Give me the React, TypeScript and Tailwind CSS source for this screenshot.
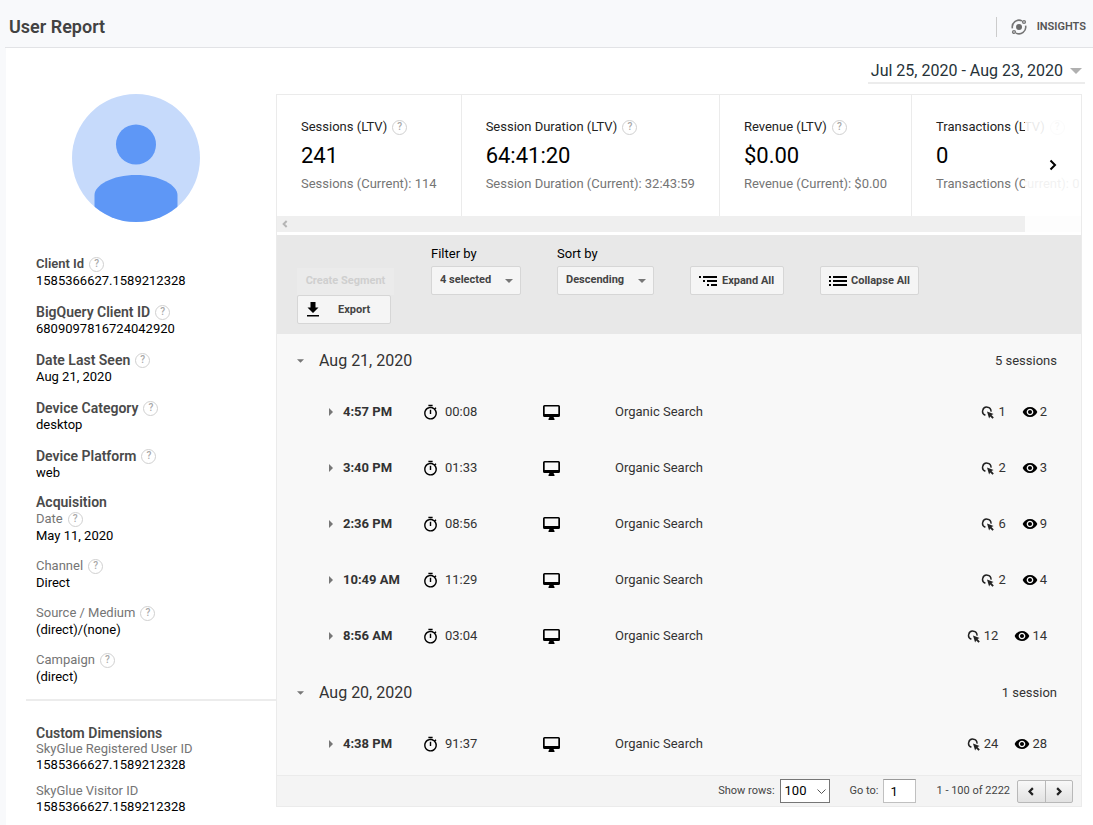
import { useState } from 'react'
import { MdOutlineTimer, MdVisibility } from 'react-icons/md'

type Session = { time: string; duration: string; source: string; events: number; views: number }
type Day = { date: string; total: string; sessions: Session[] }

const details = [
  { label: 'Client Id', value: '1585366627.1589212328', size: 'text-[13px]' },
  { label: 'BigQuery Client ID', value: '6809097816724042920', size: 'text-sm' },
  { label: 'Date Last Seen', value: 'Aug 21, 2020', size: 'text-sm' },
  { label: 'Device Category', value: 'desktop', size: 'text-sm' },
  { label: 'Device Platform', value: 'web', size: 'text-sm' },
]

const acquisition = [
  { label: 'Date', value: 'May 11, 2020' },
  { label: 'Channel', value: 'Direct' },
  { label: 'Source / Medium', value: '(direct)/(none)' },
  { label: 'Campaign', value: '(direct)' },
]

const dimensions = [
  { label: 'SkyGlue Registered User ID', value: '1585366627.1589212328' },
  { label: 'SkyGlue Visitor ID', value: '1585366627.1589212328' },
]

const stats = [
  { label: 'Sessions (LTV)', value: '241', current: 'Sessions (Current): 114' },
  { label: 'Session Duration (LTV)', value: '64:41:20', current: 'Session Duration (Current): 32:43:59' },
  { label: 'Revenue (LTV)', value: '$0.00', current: 'Revenue (Current): $0.00' },
  { label: 'Transactions (LTV)', value: '0', current: 'Transactions (Current): 0' },
]

const days: Day[] = [
  {
    date: 'Aug 21, 2020',
    total: '5 sessions',
    sessions: [
      { time: '4:57 PM', duration: '00:08', source: 'Organic Search', events: 1, views: 2 },
      { time: '3:40 PM', duration: '01:33', source: 'Organic Search', events: 2, views: 3 },
      { time: '2:36 PM', duration: '08:56', source: 'Organic Search', events: 6, views: 9 },
      { time: '10:49 AM', duration: '11:29', source: 'Organic Search', events: 2, views: 4 },
      { time: '8:56 AM', duration: '03:04', source: 'Organic Search', events: 12, views: 14 },
    ],
  },
  {
    date: 'Aug 20, 2020',
    total: '1 session',
    sessions: [{ time: '4:38 PM', duration: '91:37', source: 'Organic Search', events: 24, views: 28 }],
  },
]

function Help({ label }: { label: string }) {
  return (
    <button
      type="button"
      aria-label={`Help: ${label}`}
      className="flex size-[15px] shrink-0 items-center justify-center rounded-full border border-[#d0d0d0] text-[10px] leading-none font-medium text-[#a8a8a8]"
    >
      ?
    </button>
  )
}

function CaretDown({ className }: { className?: string }) {
  return (
    <svg viewBox="0 0 8 4" className={className} fill="currentColor" aria-hidden="true">
      <path d="M0 0h8L4 4z" />
    </svg>
  )
}

function Chevron({ left, className }: { left?: boolean; className?: string }) {
  return (
    <svg viewBox="0 0 8 12" className={className} fill="none" stroke="currentColor" aria-hidden="true">
      <path d={left ? 'M6.5 1.5 2 6l4.5 4.5' : 'M1.5 1.5 6 6l-4.5 4.5'} />
    </svg>
  )
}

function InsightsIcon() {
  return (
    <svg viewBox="0 0 16 16" className="size-4" fill="none" stroke="#757575" strokeWidth="1.6" aria-hidden="true">
      <circle cx="8" cy="8" r="3" fill="#6b6b6b" stroke="none" />
      <path d="M1.4 9.4A6.8 6.8 0 0 1 11 1.9M14.6 6.6A6.8 6.8 0 0 1 5 14.1" />
      <circle cx="13" cy="3" r="1.4" strokeWidth="1.4" />
      <circle cx="3" cy="13" r="1.4" strokeWidth="1.4" />
    </svg>
  )
}

function DownloadIcon() {
  return (
    <svg viewBox="0 0 12 15" className="h-[15px] w-3" aria-hidden="true">
      <path d="M3.500 0h5v5.500H11.500L6 11 .5 5.500h3zM0 13h12v1.400H0z" />
    </svg>
  )
}

function MonitorIcon() {
  return (
    <svg viewBox="0 0 17 15" className="h-[15px] w-[17px]" aria-hidden="true">
      <path
        fillRule="evenodd"
        d="M1.500 0h14A1.500 1.500 0 0 1 17 1.500v9a1.500 1.500 0 0 1-1.500 1.500h-5l1 2v1h-6v-1l1-2h-5A1.500 1.500 0 0 1 0 10.500v-9A1.500 1.500 0 0 1 1.500 0zM1.700 1.500v7.500h13.600V1.500z"
      />
    </svg>
  )
}

function ClickIcon() {
  return (
    <svg viewBox="0 0 13 13" className="size-[13px]" aria-hidden="true">
      <path d="M4.4 9.300A4.200 4.200 0 1 1 10 5.600" fill="none" stroke="#222" strokeWidth="1.5" />
      <path d="M6 5.400l6.600 2.500-2.100 1.200 2.300 2.300-1.300 1.300-2.300-2.300-1.100 2.200z" fill="#222" />
    </svg>
  )
}

function ExpandIcon() {
  return (
    <svg viewBox="0 0 18 10" className="h-2.5 w-[18px]" shapeRendering="crispEdges" aria-hidden="true">
      <path d="M0 0h2v2H0zM4 0h14v2H4zM4 4h2v2H4zM8 4h10v2H8zM8 8h2v2H8zM12 8h6v2h-6z" />
    </svg>
  )
}

function CollapseIcon() {
  return (
    <svg viewBox="0 0 18 10" className="h-2.5 w-[18px]" shapeRendering="crispEdges" aria-hidden="true">
      <path d="M0 0h2v2H0zM4 0h14v2H4zM0 4h2v2H0zM4 4h14v2H4zM0 8h2v2H0zM4 8h14v2H4z" />
    </svg>
  )
}

function Avatar() {
  return (
    <svg viewBox="0 0 128 128" className="size-32" role="img" aria-label="User">
      <clipPath id="avatar">
        <circle cx="64" cy="64" r="64" />
      </clipPath>
      <g clipPath="url(#avatar)">
        <path d="M0 0h128v128H0z" fill="#c6dafb" />
        <circle cx="64" cy="50.5" r="20" fill="#5e97f6" />
        <path d="M22.500 101c0-10 18-20 41.500-20s41.500 10 41.500 20v27h-83z" fill="#5e97f6" />
      </g>
    </svg>
  )
}

function Sidebar() {
  return (
    <aside className="w-[270px] shrink-0 pt-[46px] text-[13px] leading-4 text-black">
      <div className="flex justify-center pr-2.5">
        <Avatar />
      </div>
      <dl className="mt-[33px] pl-[30px]">
        {details.map((d) => (
          <div key={d.label} className="mb-3.5 last:mb-[13px]">
            <dt className={`flex h-[18px] items-center gap-[5px] font-semibold text-[#4a4a4a] ${d.size}`}>
              {d.label}
              <Help label={d.label} />
            </dt>
            <dd>{d.value}</dd>
          </div>
        ))}
      </dl>
      <div className="pl-[30px]">
        <h2 className="text-sm leading-4 font-semibold text-[#4a4a4a]">Acquisition</h2>
        <dl>
          {acquisition.map((d) => (
            <div key={d.label} className="mb-[13px] last:mb-3.5">
              <dt className="flex h-[18px] items-center gap-[5px] text-[#757575]">
                {d.label}
                <Help label={d.label} />
              </dt>
              <dd>{d.value}</dd>
            </div>
          ))}
        </dl>
      </div>
      <div className="ml-5 border-t-2 border-[#ececec] pt-6 pl-2.5">
        <h2 className="text-sm leading-4 font-semibold text-[#4a4a4a]">Custom Dimensions</h2>
        <dl>
          {dimensions.map((d) => (
            <div key={d.label} className="mb-2.5">
              <dt className="text-[#757575]">{d.label}</dt>
              <dd>{d.value}</dd>
            </div>
          ))}
        </dl>
      </div>
    </aside>
  )
}

function Stats() {
  return (
    <section className="relative">
      <div className="flex h-[121px] overflow-hidden">
        {stats.map((s) => (
          <div
            key={s.label}
            className="shrink-0 border-r border-[#ebebeb] px-6 pt-6 whitespace-nowrap last:border-r-0 last:pr-0"
          >
            <div className="flex h-4 items-center gap-[5px] text-[13px] text-[#222]">
              {s.label}
              <Help label={s.label} />
            </div>
            <div className="mt-1.5 text-[22px] leading-[30px] text-black">{s.value}</div>
            <div className="mt-1 text-[13px] leading-[18px] text-[#757575]">{s.current}</div>
          </div>
        ))}
      </div>
      <div className="mb-[3px] flex h-4 items-center bg-[#efefef] pl-[5px]">
        <Chevron left className="h-2 w-[6px] stroke-3 text-[#b5b5b5]" />
      </div>
      <div className="absolute inset-y-0 right-0 flex w-14 items-center justify-center bg-white/90">
        <button type="button" aria-label="Next metrics" className="pt-0.5">
          <Chevron className="h-3 w-2 stroke-2 text-black" />
        </button>
      </div>
    </section>
  )
}

const btn =
  'flex h-[29px] items-center rounded-xs border border-[#d6d6d6] bg-[#f5f5f5] text-[11px] font-bold text-[#444]'

function Toolbar() {
  return (
    <section className="flex items-start gap-9 bg-[#e8e8e8] pt-[11px] pb-2.5 pl-5">
      <div className="flex w-[98px] flex-col items-start pt-[22px]">
        <button
          type="button"
          disabled
          className="h-[27px] w-[97px] bg-[#ebebeb] text-[11px] font-bold whitespace-nowrap text-[#cfcfcf]"
        >
          Create Segment
        </button>
        <button type="button" className={`${btn} w-[94px] gap-[19px] pl-[9px]`}>
          <DownloadIcon />
          <span className="pt-px">Export</span>
        </button>
      </div>
      <div className="relative flex flex-col gap-1">
        <label htmlFor="filter" className="text-[13px] leading-4 text-black">Filter by</label>
        <select id="filter" className={`${btn} w-[90px] appearance-none px-2`}>
          <option>4 selected</option>
        </select>
        <CaretDown className="pointer-events-none absolute right-2 bottom-3 h-1 w-2 text-[#777]" />
      </div>
      <div className="relative flex flex-col gap-1">
        <label htmlFor="sort" className="text-[13px] leading-4 text-black">Sort by</label>
        <select id="sort" className={`${btn} w-[97px] appearance-none px-2`}>
          <option>Descending</option>
          <option>Ascending</option>
        </select>
        <CaretDown className="pointer-events-none absolute right-2 bottom-3 h-1 w-2 text-[#777]" />
      </div>
      <button type="button" className={`${btn} mt-5 w-[94px] gap-[5px] pl-2 whitespace-nowrap`}>
        <ExpandIcon />
        <span className="pt-px">Expand All</span>
      </button>
      <button type="button" className={`${btn} mt-5 w-[99px] gap-1 pl-2 whitespace-nowrap`}>
        <CollapseIcon />
        <span className="pt-px">Collapse All</span>
      </button>
    </section>
  )
}

function DayGroup({ day }: { day: Day }) {
  const [open, setOpen] = useState(true)
  return (
    <section>
      <div className="flex h-12 items-center pt-0.5 pr-6 pl-5">
        <button
          type="button"
          aria-expanded={open}
          onClick={() => setOpen(!open)}
          className="flex items-center gap-[15px] text-base text-[#333]"
        >
          <CaretDown className="h-1 w-[7px] text-[#777]" />
          {day.date}
        </button>
        <span className="ml-auto text-[13px]">{day.total}</span>
      </div>
      {open && (
        <ul>
          {day.sessions.map((s) => (
            <li key={s.time} className="flex h-14 items-center pr-[34px] pl-[52px] text-[13px]">
              <button type="button" className="flex w-[93px] items-center gap-2.5 font-bold text-[#333]">
                <svg viewBox="0 0 4 8" className="h-2 w-1" fill="#777" aria-hidden="true">
                  <path d="M0 0l4 4-4 4z" />
                </svg>
                {s.time}
              </button>
              <span className="flex w-[121px] items-center gap-1.5">
                <MdOutlineTimer className="size-[17px] text-black" />
                {s.duration}
              </span>
              <MonitorIcon />
              <span className="pl-[55px]">{s.source}</span>
              <span className="ml-auto flex items-center gap-1">
                <ClickIcon />
                {s.events}
              </span>
              <span className="ml-4 flex items-center gap-0.5">
                <MdVisibility className="size-4 text-black" />
                {s.views}
              </span>
            </li>
          ))}
        </ul>
      )}
    </section>
  )
}

function Pager() {
  return (
    <footer className="flex h-[31px] items-center justify-end border-t border-[#ebebeb] bg-[#f4f4f4] pr-2 text-[11px] text-[#444]">
      <label htmlFor="rows">Show rows:</label>
      <div className="relative ml-[5px]">
        <select
          id="rows"
          className="block h-6 w-[50px] appearance-none border border-[#767676] bg-white pl-1 text-[13px] text-black"
        >
          <option>100</option>
          <option>50</option>
        </select>
        <svg
          viewBox="0 0 9 5"
          className="pointer-events-none absolute top-2.5 right-1 h-[5px] w-[9px]"
          fill="none"
          stroke="#555"
          aria-hidden="true"
        >
          <path d="M.5.5l4 4 4-4" />
        </svg>
      </div>
      <label htmlFor="page" className="ml-5">Go to:</label>
      <input
        id="page"
        defaultValue="1"
        className="ml-[5px] h-6 w-[33px] border border-[#c0c0c0] border-t-[#999] bg-white pl-1.5 text-[13px] text-black"
      />
      <span className="ml-5">1 - 100 of 2222</span>
      <div className="ml-[7px] flex h-[23px] w-14 rounded-xs border border-[#b8b8b8] bg-linear-to-b from-[#f8f8f8] to-[#e2e2e2] text-[#222]">
        <button type="button" aria-label="Previous page" className="flex flex-1 items-center justify-center border-r border-[#b8b8b8]">
          <Chevron left className="h-[9px] w-1.5 stroke-3" />
        </button>
        <button type="button" aria-label="Next page" className="flex flex-1 items-center justify-center">
          <Chevron className="h-[9px] w-1.5 stroke-3" />
        </button>
      </div>
    </footer>
  )
}

export default function App() {
  return (
    <div className="min-h-screen bg-[#f8f9fb] pl-[5px] font-[Roboto,'Liberation_Sans',sans-serif] text-[#333]">
      <header className="flex h-12 items-center justify-between border-b border-[#e2e3e6] pt-[7px] pr-[7px] pl-1">
        <h1 className="text-lg font-semibold text-[#424242]">User Report</h1>
        <button
          type="button"
          className="flex h-5 items-center gap-2.5 border-l border-[#ccc] pl-3.5 text-[11px] font-semibold text-[#555]"
        >
          <InsightsIcon />
          <span className="pt-px">INSIGHTS</span>
        </button>
      </header>
      <div className="ml-px flex min-h-[calc(100vh-48px)] items-start bg-white">
        <Sidebar />
        <main className="min-w-0 flex-1 pr-2">
          <div className="flex h-[46px] justify-end">
            <button
              type="button"
              className="mt-2.5 flex h-[26px] items-center gap-[7px] border-b-2 border-[#ececec] pt-0.5 pr-[3px] pl-[3px] text-base text-[#263238]"
            >
              Jul 25, 2020 - Aug 23, 2020
              <CaretDown className="h-1.5 w-3 text-[#b0b0b0]" />
            </button>
          </div>
          <div className="mr-[3px] border border-[#ebebeb]">
            <Stats />
            <Toolbar />
            <div className="flex flex-col gap-1 bg-[#f8f8f8] pt-0.5 pb-[3px]">
              {days.map((d) => (
                <DayGroup key={d.date} day={d} />
              ))}
            </div>
            <Pager />
          </div>
        </main>
      </div>
    </div>
  )
}
